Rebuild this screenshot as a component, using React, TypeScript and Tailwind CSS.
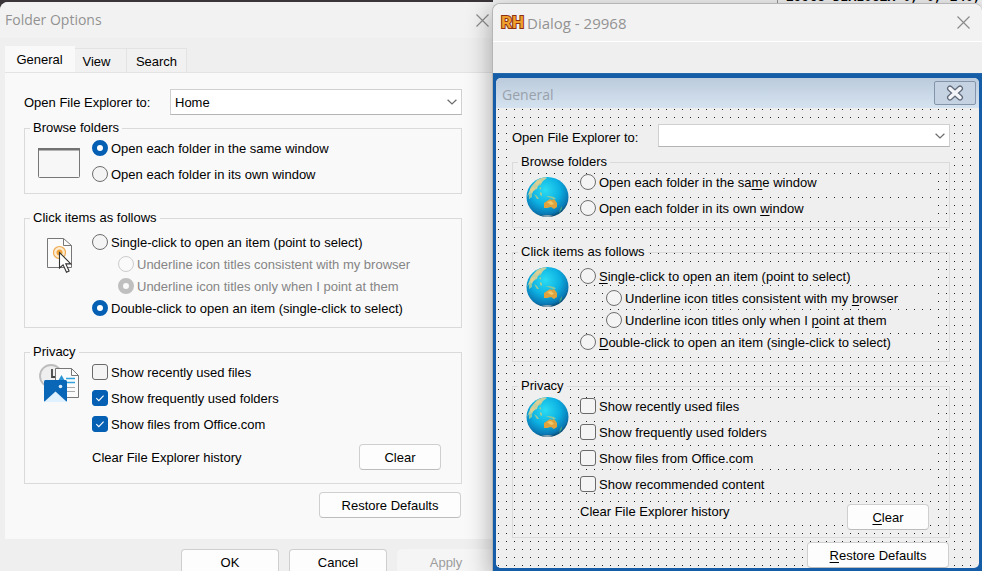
import { useId, useState, type ReactNode } from "react";

const uiFont = "font-['Liberation_Sans',Arial,sans-serif]";
const titleFont = "font-['Open_Sans','Noto_Sans',sans-serif]";

/** Renders a caption whose "&" marks the underlined access key. */
function Caption({ text }: { text: string }) {
  const at = text.indexOf("&");
  if (at < 0) return <>{text}</>;
  return (
    <>
      {text.slice(0, at)}
      <span className="underline underline-offset-2">{text[at + 1]}</span>
      {text.slice(at + 2)}
    </>
  );
}

type ChoiceProps = {
  text: string;
  name?: string;
  checked?: boolean;
  disabled?: boolean;
  nested?: boolean;
};

function Radio({ text, name, checked, disabled, nested }: ChoiceProps) {
  return (
    <label
      className={`flex h-4 items-center gap-[3px] whitespace-nowrap ${nested ? "ml-[26px]" : ""} ${
        disabled ? "text-[#858585]" : ""
      } bg-inherit`}
    >
      <input
        type="radio"
        name={name}
        defaultChecked={checked}
        disabled={disabled}
        className="size-4 shrink-0 appearance-none rounded-full border border-[#6e6e6e] bg-[#f4f4f4] checked:border-5 checked:border-[#0560b4] checked:bg-white disabled:border-[#cccccc] disabled:bg-[#fafafa] disabled:checked:border-[#bfbfbf]"
      />
      <span className="pt-px">
        <Caption text={text} />
      </span>
    </label>
  );
}

function Check({ text, checked }: ChoiceProps) {
  return (
    <label className="relative flex h-4 items-center gap-[3px] whitespace-nowrap bg-inherit">
      <input
        type="checkbox"
        defaultChecked={checked}
        className="peer size-4 shrink-0 appearance-none rounded-[3px] border border-[#6a6a6a] bg-[#f4f4f4] checked:border-[#0560b4] checked:bg-[#0560b4]"
      />
      <svg
        viewBox="0 0 16 16"
        className="pointer-events-none absolute top-0 left-0 hidden size-4 peer-checked:block"
        fill="none"
        stroke="#fff"
        strokeWidth="1.1"
      >
        <path d="M4.3 8.2 6.8 10.6 11.6 5.6" />
      </svg>
      <span className="pt-px">
        <Caption text={text} />
      </span>
    </label>
  );
}

function Combo({ id, options, height }: { id: string; options: string[]; height: string }) {
  return (
    <div className="relative w-[292px] shrink-0">
      <select
        id={id}
        className={`block w-full appearance-none border border-[#d0d0d0] border-b-[#b4b4b4] bg-white pt-[2px] pr-6 pl-1 ${height}`}
      >
        {options.map((o) => (
          <option key={o}>{o}</option>
        ))}
      </select>
      <svg
        viewBox="0 0 10 6"
        className="pointer-events-none absolute top-1/2 right-[5px] h-[6px] w-[10px] -translate-y-1/2"
        fill="none"
        stroke="#6c6c6c"
        strokeWidth="1.2"
      >
        <path d="M.6.7 5 5 9.4.7" />
      </svg>
    </div>
  );
}

function PushButton({ text, size, disabled }: { text: string; size: string; disabled?: boolean }) {
  return (
    <button
      type="button"
      disabled={disabled}
      className={`shrink-0 rounded-[4px] border border-[#cfcfcf] border-b-[#bdbdbd] bg-[#fdfdfd] pt-px disabled:border-[#f4f4f4] disabled:bg-[#f5f5f5] disabled:text-[#9c9c9c] ${size}`}
    >
      <Caption text={text} />
    </button>
  );
}

type GroupProps = {
  title: string;
  icon: ReactNode;
  className: string;
  rows: string;
  children: ReactNode;
};

function Group({ title, icon, className, rows, children }: GroupProps) {
  return (
    <fieldset className={`min-w-0 border border-[#dadada] bg-inherit ${className}`}>
      <legend className="ml-[5px] h-4 px-[3px] leading-4">{title}</legend>
      <div className="flex">
        <div className="w-[67px] shrink-0 pl-[13px]">{icon}</div>
        <div className={`flex min-w-0 flex-1 flex-col ${rows}`}>{children}</div>
      </div>
    </fieldset>
  );
}

function WindowIcon() {
  return (
    <svg viewBox="0 0 42 30" className="mt-3 h-[30px] w-[42px]">
      <rect x=".5" y=".5" width="41" height="29" rx="1" fill="#f7f7f7" stroke="#777" />
      <path d="M0 1.2h42" stroke="#727272" strokeWidth="2.4" />
    </svg>
  );
}

function PointerIcon() {
  return (
    <svg viewBox="0 0 42 38" className="mt-3 h-[38px] w-[42px]">
      <path d="M9.5.5h16l8 7v22h-24z" fill="#fbfbfb" stroke="#777" />
      <path d="M25.5.5v7h8" fill="none" stroke="#777" />
      <circle cx="21.5" cy="14.5" r="6" fill="#fdebcf" stroke="#efac55" strokeWidth="1.2" />
      <circle cx="21.5" cy="14.5" r="3" fill="#efa53f" />
      <path
        d="M21.5 14.5v15.500l3.600-3.200 3.400 7.500 2.600-1.200-3.300-7.200h5z"
        fill="#fff"
        stroke="#333"
        strokeWidth="1.1"
      />
    </svg>
  );
}

function PrivacyIcon() {
  return (
    <svg viewBox="0 0 42 40" className="mt-1 h-10 w-[42px]">
      <circle cx="13" cy="12" r="11" fill="#efefef" stroke="#bdbdbd" strokeWidth="1.8" />
      <path d="M14 5v8h4" fill="none" stroke="#444" strokeWidth="1.8" />
      <path d="M17.5 4.500h16l7 7v22h-23z" fill="#fbfbfb" stroke="#777" />
      <path d="M33.5 4.500v7h7" fill="none" stroke="#777" />
      <path d="M28 14.500h9M28 18.500h9" stroke="#31a3df" strokeWidth="1.4" />
      <path d="M29 23.500h8M29 27.500h8" stroke="#aaa" />
      <path d="m20 17 3.500-6 3.500 6z" fill="#2b95d6" />
      <rect x="6" y="16" width="23" height="22" rx="1.500" fill="#0a66b6" />
      <path d="M6 38 17.500 27.500 29 38z" fill="#dff1ff" />
      <circle cx="22.500" cy="22.500" r="1.800" fill="#d9efff" />
    </svg>
  );
}

function Globe({ className }: { className: string }) {
  const id = useId();
  return (
    <div className={`size-[43px] bg-[#efefef] ${className}`}>
      <svg viewBox="0 0 43 43" className="size-full">
        <defs>
          <radialGradient id={id} cx=".45" cy=".33" r=".68">
            <stop offset="0" stopColor="#2bdcf2" />
            <stop offset=".5" stopColor="#0cb0e2" />
            <stop offset=".82" stopColor="#0a78b4" />
            <stop offset="1" stopColor="#082c44" />
          </radialGradient>
          <clipPath id={`${id}c`}>
            <ellipse cx="21.500" cy="21" rx="21" ry="20" />
          </clipPath>
        </defs>
        <g clipPath={`url(#${id}c)`}>
          <rect width="43" height="43" fill={`url(#${id})`} />
          <path d="m5 11 6-7 7-3 3 1-4 3-2 3-3 2-1 3-3 1-2 4-3 0-2 3z" fill="#c3cfa0" />
          <path d="m9 7 5-3 1 2-4 3zM4 13l4-2 1 3-4 2z" fill="#e2cf90" />
          <path d="m13 8 3-1-2 3zM3 18l3-1 0 4-3 2z" fill="#8fc7a4" />
          <path d="m8 18 3 2 2 3-2 0zM14 16l2 1 0 3-2-1zM13 12l2-1 0 3z" fill="#9bcb9a" />
          <path d="m20 20 3 0 5 1 2 2-3 0-5-2z" fill="#86c8a4" />
          <path d="m18 27 3-2 3-2 2 1 2-1 3 4 0 4-3 2-3-2-4 1-3 0z" fill="#dfa33e" />
          <path d="m21 26 4-1 3 3-3 1z" fill="#f0c769" />
          <path d="m34 33 2-3 0 3-3 4z" fill="#3f9f86" />
          <path d="M15 40q7-2 12 0l-6 2z" fill="#8ba6b2" />
        </g>
      </svg>
    </div>
  );
}

function CloseIcon() {
  return (
    <svg viewBox="0 0 13 13" className="size-[13px]" stroke="#8b8b8b" strokeWidth="1.2">
      <path d="m.5.5 12 12M12.5.5l-12 12" />
    </svg>
  );
}

function FolderOptions() {
  const [tab, setTab] = useState("General");
  const id = useId();
  return (
    <section className="relative w-[493px] shrink-0 overflow-hidden rounded-tl-lg bg-[#efefef]">
      <header className="flex h-9 items-center justify-between bg-[#f2f2f2] pr-1 pl-[5px]">
        <h1 className={`text-sm text-[#929292] ${titleFont}`}>Folder Options</h1>
        <button type="button" aria-label="Close Folder Options">
          <CloseIcon />
        </button>
      </header>
      <div role="tablist" className="mt-2 flex h-[26px] items-end pl-[5px]">
        {[
          { name: "General", width: "w-[70px]" },
          { name: "View", width: "w-[52px] pt-[2px] pr-2" },
          { name: "Search", width: "w-[60px] pt-[2px]" },
        ].map(({ name, width }) => (
          <button
            key={name}
            type="button"
            role="tab"
            aria-selected={tab === name}
            onClick={() => setTab(name)}
            className={`${width} h-6 border-t border-r border-[#e3e3e3] bg-[#f1f1f1] aria-selected:h-[26px] aria-selected:border-[#f9f9f9] aria-selected:bg-[#f9f9f9]`}
          >
            {name}
          </button>
        ))}
      </div>
      <div className="ml-[5px] border-t border-[#e3e3e3] bg-[#f9f9f9] pr-[31px] pb-[21px] pl-[19px]">
        <div className="flex items-center justify-between pt-4">
          <label htmlFor={id} className="pt-[2px]">
            Open File Explorer to:
          </label>
          <Combo id={id} options={["Home", "This PC"]} height="h-[26px]" />
        </div>
        <Group title="Browse folders" icon={<WindowIcon />} className="mt-[5px] pb-[11px]" rows="gap-[10px] pt-1">
          <Radio name="browse" text="Open each folder in the same window" checked />
          <Radio name="browse" text="Open each folder in its own window" />
        </Group>
        <Group title="Click items as follows" icon={<PointerIcon />} className="mt-4 pb-[11px]" rows="gap-[6px] pt-2">
          <Radio name="click" text="Single-click to open an item (point to select)" />
          <Radio name="underline" text="Underline icon titles consistent with my browser" nested disabled />
          <Radio name="underline" text="Underline icon titles only when I point at them" nested disabled checked />
          <Radio name="click" text="Double-click to open an item (single-click to select)" checked />
        </Group>
        <Group title="Privacy" icon={<PrivacyIcon />} className="mt-4 pb-[13px]" rows="gap-[10px] pt-1">
          <Check text="Show recently used files" />
          <Check text="Show frequently used folders" checked />
          <Check text="Show files from Office.com" checked />
          <div className="mt-[2px] flex items-center justify-between pr-5">
            <span className="pt-px">Clear File Explorer history</span>
            <PushButton text="Clear" size="h-[26px] w-[82px]" />
          </div>
        </Group>
        <div className="mt-2 flex justify-end pr-px">
          <PushButton text="Restore Defaults" size="h-[26px] w-[142px]" />
        </div>
      </div>
      <footer className="mt-[10px] -mr-[2px] flex justify-end gap-[10px]">
        <PushButton text="OK" size="h-[26px] w-[98px]" />
        <PushButton text="Cancel" size="h-[26px] w-[98px]" />
        <PushButton text="Apply" size="h-[26px] w-[98px]" disabled />
      </footer>
    </section>
  );
}

function EditorDialog() {
  const id = useId();
  return (
    <div className="overflow-hidden rounded-[5px] bg-[#efefef]">
      <header className="flex h-[30px] items-center justify-between bg-linear-to-b from-[#bccbdc] to-[#d5e3f0] pr-[3px] pl-[6px]">
        <h2 className={`pt-[3px] text-sm text-[#98a1aa] ${titleFont}`}>General</h2>
        <button
          type="button"
          aria-label="Close General"
          className="flex h-6 w-[42px] items-center justify-center rounded-[2px] border border-[#8495ab] bg-[#c4d2e2]"
        >
          <svg viewBox="0 0 20 18" className="h-[18px] w-5" strokeLinecap="round">
            <path d="m5 4.500 10 9M15 4.500l-10 9" stroke="#626b7c" strokeWidth="6" />
            <path d="m5 4.500 10 9M15 4.500l-10 9" stroke="#f4f5f8" strokeWidth="3.500" />
          </svg>
        </button>
      </header>
      <div className="pr-2 pb-[10px]">
        <div className="bg-[linear-gradient(90deg,transparent_1px,#efefef_1px),linear-gradient(#222_1px,transparent_1px)] bg-[length:8px_8px] bg-[position:2px_1px] pt-4 pr-[21px] pl-4">
          <div className="flex h-[37px] items-start justify-between">
            <div className="mt-1 h-[33px] flex-1 bg-[#efefef] pt-[2px]">
              <label htmlFor={id}>Open File Explorer to:</label>
            </div>
            <div className="h-full bg-[#efefef]">
              <Combo id={id} options={[""]} height="h-[23px]" />
            </div>
          </div>
          <Group
            title="Browse folders"
            icon={<Globe className="mt-[6px]" />}
            className="-mt-[7px] bg-transparent bg-[linear-gradient(#efefef,#efefef)] bg-[length:100%_9px] bg-no-repeat pb-2 [&>legend]:bg-[#efefef]"
            rows="gap-[10px] pt-1 pr-3 *:bg-[#efefef]"
          >
            <Radio name="dlg-browse" text="Open each folder in the sa&me window" />
            <Radio name="dlg-browse" text="Open each folder in its own &window" />
          </Group>
          <Group
            title="Click items as follows"
            icon={<Globe className="mt-[6px]" />}
            className="mt-4 bg-transparent pb-[11px] [&>legend]:bg-[#efefef]"
            rows="gap-[6px] pt-2 pr-3 *:bg-[#efefef]"
          >
            <Radio name="dlg-click" text="&Single-click to open an item (point to select)" />
            <Radio name="dlg-underline" text="Underline icon titles consistent with my &browser" nested />
            <Radio name="dlg-underline" text="Underline icon titles only when I &point at them" nested />
            <Radio name="dlg-click" text="&Double-click to open an item (single-click to select)" />
          </Group>
          <Group
            title="Privacy"
            icon={<Globe className="mt-[2px]" />}
            className="mt-4 bg-transparent pb-[7px] [&>legend]:bg-[#efefef]"
            rows="gap-[10px] pt-1 *:mr-3 *:bg-[#efefef]"
          >
            <Check text="Show recently used files" />
            <Check text="Show frequently used folders" />
            <Check text="Show files from Office.com" />
            <Check text="Show recommended content" />
            <div className="mt-[2px] flex h-4 items-start justify-between pr-2">
              <span>Clear File Explorer history</span>
              <PushButton text="&Clear" size="h-[26px] w-[82px]" />
            </div>
            <div className="h-0" />
          </Group>
          <div className="-mb-[10px] flex justify-end pt-[4px] pr-px">
            <PushButton text="&Restore Defaults" size="h-[26px] w-[142px]" />
          </div>
        </div>
      </div>
    </div>
  );
}

function ResourceWindow() {
  return (
    <section className="relative flex min-w-0 flex-1 flex-col">
      <div className="flex h-[3px] justify-end overflow-hidden bg-[#f3f3f3]">
        <p className="-mt-[10px] w-[205px] shrink-0 border-l border-[#999] pl-2 font-['Liberation_Mono',monospace] text-[13px] leading-4 font-bold whitespace-nowrap">
          29968 DIALOGEX 0, 0, 240, 2
        </p>
      </div>
      <div className="-ml-px flex min-h-0 flex-1 flex-col overflow-hidden rounded-t-lg border-t border-l border-[#b5b5b5] bg-[#efefef] shadow-[0_6px_24px_2px_rgba(0,0,0,0.3)]">
        <header className="flex h-[38px] shrink-0 items-center justify-between border-b border-white bg-[#f2f2f2] pr-3 pl-2">
          <div className="flex items-center gap-[6px]">
            <span
              aria-hidden="true"
              className="w-5 font-['Liberation_Sans_Narrow','Roboto',sans-serif] text-[17px] leading-none font-bold text-[#f0a02c] [paint-order:stroke] [-webkit-text-stroke:2px_#8a3016]"
            >
              RH
            </span>
            <h1 className={`text-[15px] text-[#929292] ${titleFont}`}>Dialog - 29968</h1>
          </div>
          <button type="button" aria-label="Close Dialog - 29968">
            <CloseIcon />
          </button>
        </header>
        <div className="h-[31px] shrink-0" />
        <div className="flex-1 border-t border-[#2467ab] bg-[#165da8] px-[3px] pt-1">
          <EditorDialog />
        </div>
      </div>
    </section>
  );
}

export default function App() {
  return (
    <main className={`flex h-screen overflow-hidden bg-[#f3f3f3] text-[13px] leading-4 text-black ${uiFont}`}>
      <div className="flex bg-[#3a3539] pt-[2px]">
        <FolderOptions />
      </div>
      <ResourceWindow />
    </main>
  );
}
